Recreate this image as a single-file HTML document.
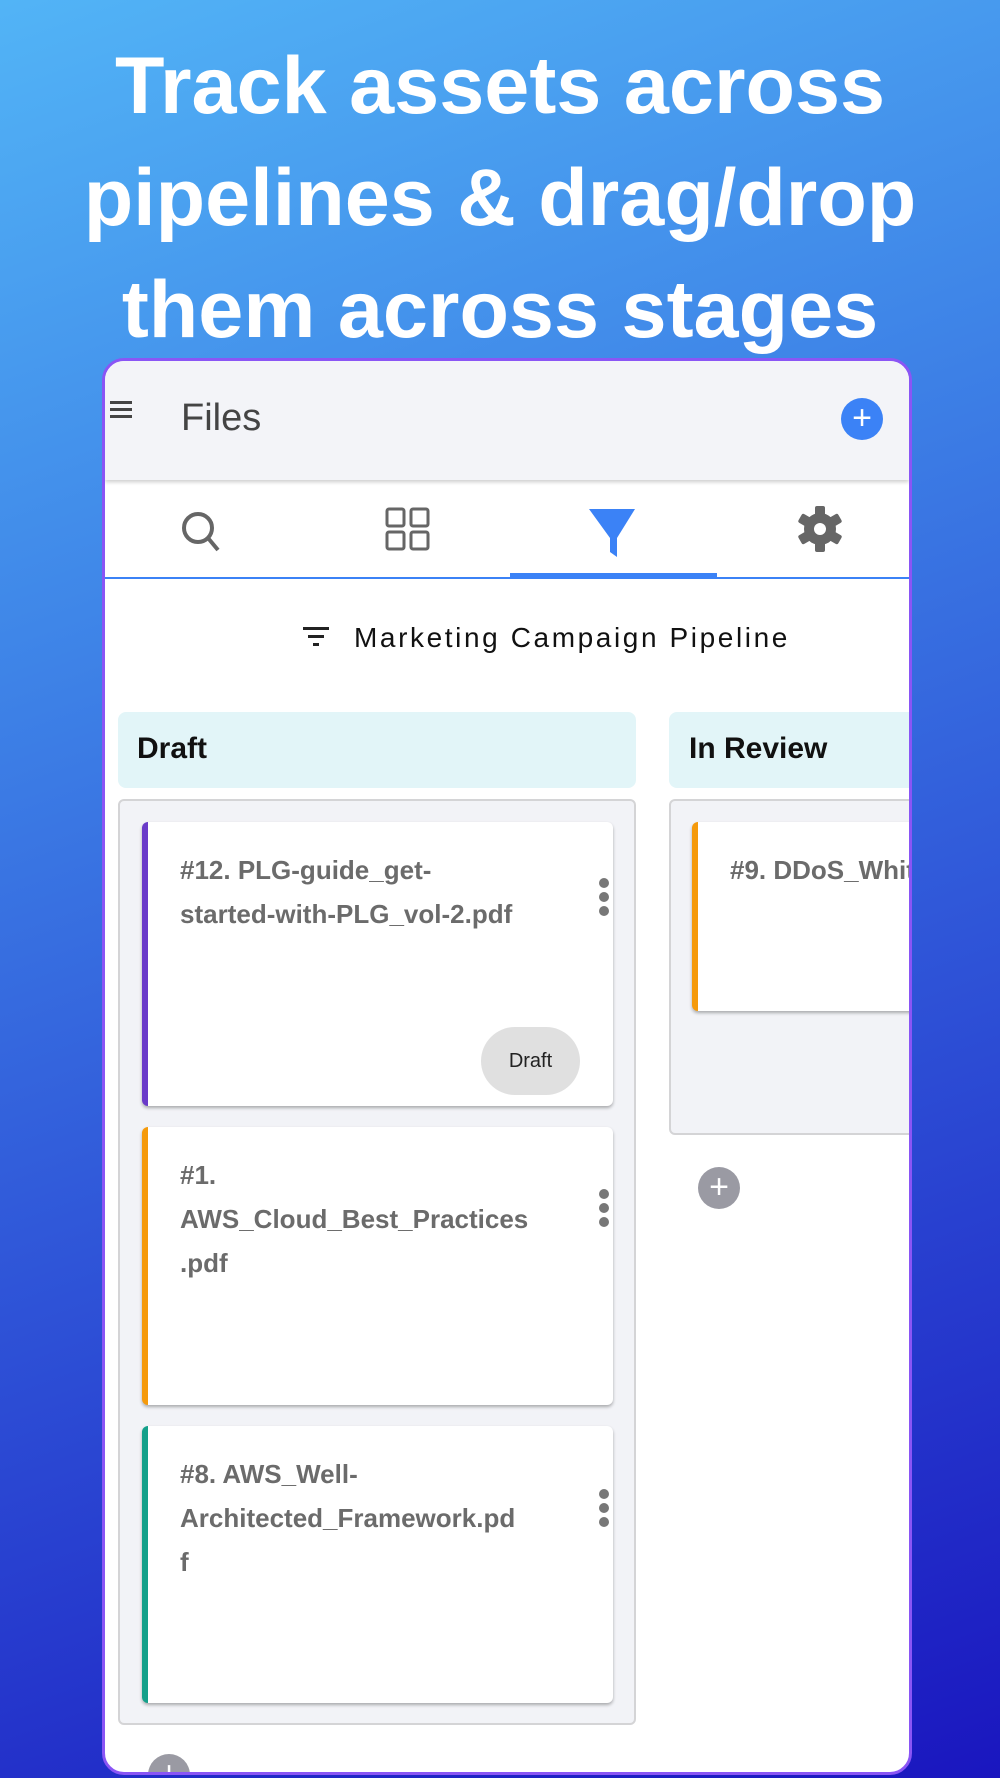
<!DOCTYPE html>
<html><head><meta charset="utf-8"><style>
*{margin:0;padding:0;box-sizing:border-box}
body{width:1000px;height:1778px;overflow:hidden;position:relative;font-family:"Liberation Sans",sans-serif;background:linear-gradient(160deg,#52b4f6 0%,#3f86e8 30%,#2f55d8 60%,#1a16bf 100%)}
.title{position:absolute;top:30px;left:0;width:1000px;text-align:center;color:#fff;font-weight:bold;font-size:81px;line-height:112px;letter-spacing:0px}
.frame{position:absolute;left:102px;top:358px;width:810px;height:1417px;background:#fff;border:3px solid #8a55f5;border-radius:22px;overflow:hidden}
.hdr{position:absolute;left:0;top:0;width:100%;height:119px;background:#f3f4f8;box-shadow:0 2px 4px rgba(0,0,0,.2)}
.abs{position:absolute}
.card{position:absolute;background:#fff;border-radius:6px;box-shadow:0 2px 3px rgba(0,0,0,.3)}
.ct{position:absolute;left:32px;top:26px;font-size:26px;font-weight:bold;color:#6b6b6b;line-height:44px;white-space:nowrap}
.keb{position:absolute;width:10px}
.keb i{display:block;width:10px;height:10px;border-radius:50%;background:#777;margin-bottom:4px}
.hd{position:absolute;font-size:30px;color:#111;font-weight:bold}
</style></head><body>
<div class="title">Track assets across<br>pipelines &amp; drag/drop<br>them across stages</div>
<div class="frame">
 <div class="hdr">
  <div class="abs" style="left:5px;top:40px;width:22px">
   <div style="height:3px;background:#444;margin-bottom:4px"></div><div style="height:3px;background:#444;margin-bottom:4px"></div><div style="height:3px;background:#444"></div></div>
  <div class="abs" style="left:76px;top:36px;font-size:38px;color:#444">Files</div>
  <div class="abs" style="left:736px;top:37px;width:42px;height:42px;border-radius:50%;background:#3b82f6;color:#fff;font-size:34px;line-height:40px;text-align:center">+</div>
 </div>
 <svg class="abs" style="left:0;top:119px" width="810" height="102">
  <g fill="none" stroke="#666" stroke-width="4"><circle cx="93" cy="48" r="14"/><line x1="103" y1="58" x2="113" y2="70"/></g>
  <g fill="none" stroke="#666" stroke-width="3"><rect x="282" y="29" width="17" height="17" rx="2"/><rect x="306" y="29" width="17" height="17" rx="2"/><rect x="282" y="52" width="17" height="17" rx="2"/><rect x="306" y="52" width="17" height="17" rx="2"/></g>
  <path d="M484 29 H530 L512 58 V77 L505 72 V58 Z" fill="#3b82f6"/>
  <g transform="translate(715,49)" fill="#666"><circle r="16"/><g><rect x="-5" y="-23" width="10" height="46" rx="2"/><rect x="-5" y="-23" width="10" height="46" rx="2" transform="rotate(60)"/><rect x="-5" y="-23" width="10" height="46" rx="2" transform="rotate(120)"/></g><circle r="6" fill="#fff"/></g>
  <rect x="0" y="97" width="810" height="2" fill="#3b82f6"/>
  <rect x="405" y="93" width="207" height="6" fill="#3b82f6"/>
 </svg>
 <div class="abs" style="left:198px;top:266px;width:26px">
  <div style="height:3px;background:#222;margin-bottom:5px"></div><div style="height:3px;background:#222;margin:0 5px 5px"></div><div style="height:3px;background:#222;margin:0 10px"></div></div>
 <div class="abs" style="left:249px;top:261px;font-size:28px;letter-spacing:2.6px;color:#111">Marketing Campaign Pipeline</div>
 <div class="abs" style="left:13px;top:351px;width:518px;height:76px;background:#e2f5f8;border-radius:8px"></div>
 <div class="hd" style="left:32px;top:371px">Draft</div>
 <div class="abs" style="left:13px;top:438px;width:518px;height:926px;background:#f2f3f7;border:2px solid #d4d4d6;border-radius:6px"></div>
 <div class="card" style="left:37px;top:461px;width:471px;height:284px;border-left:6px solid #6a3bc9">
  <div class="ct">#12. PLG-guide_get-<br>started-with-PLG_vol-2.pdf</div>
  <div class="keb" style="left:451px;top:56px"><i></i><i></i><i></i></div>
  <div class="abs" style="left:333px;top:205px;width:99px;height:68px;border-radius:34px;background:#e0e0e0;font-size:20px;color:#222;text-align:center;line-height:68px">Draft</div>
 </div>
 <div class="card" style="left:37px;top:766px;width:471px;height:278px;border-left:6px solid #f59a0b">
  <div class="ct">#1.<br>AWS_Cloud_Best_Practices<br>.pdf</div>
  <div class="keb" style="left:451px;top:62px"><i></i><i></i><i></i></div>
 </div>
 <div class="card" style="left:37px;top:1065px;width:471px;height:277px;border-left:6px solid #14a08a">
  <div class="ct">#8. AWS_Well-<br>Architected_Framework.pd<br>f</div>
  <div class="keb" style="left:451px;top:63px"><i></i><i></i><i></i></div>
 </div>
 <div class="abs" style="left:43px;top:1393px;width:42px;height:42px;border-radius:50%;background:#9a9aa3;color:#fff;font-size:34px;line-height:40px;text-align:center">+</div>
 <div class="abs" style="left:564px;top:351px;width:300px;height:76px;background:#e2f5f8;border-radius:8px"></div>
 <div class="hd" style="left:584px;top:371px">In Review</div>
 <div class="abs" style="left:564px;top:438px;width:300px;height:336px;background:#f2f3f7;border:2px solid #d4d4d6;border-radius:6px"></div>
 <div class="card" style="left:587px;top:461px;width:260px;height:189px;border-left:6px solid #f59a0b">
  <div class="ct">#9. DDoS_Whitepaper</div>
 </div>
 <div class="abs" style="left:593px;top:806px;width:42px;height:42px;border-radius:50%;background:#9a9aa3;color:#fff;font-size:34px;line-height:40px;text-align:center">+</div>
</div>
</body></html>
